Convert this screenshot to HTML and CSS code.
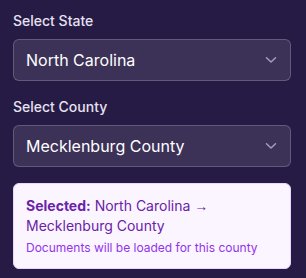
FILE: index.html
```html
<!DOCTYPE html>
<html>
<head>
<meta charset="utf-8">
<link rel="stylesheet" href="styles.css">
</head>
<body>
<div class="panel">
  <div class="field">
    <label class="label">Select State</label>
    <div class="select">
      <span class="value">North Carolina</span>
      <svg class="chev" width="12" height="8" viewBox="0 0 12 8"><path d="M1.5 1.8 L6 6 L10.5 1.8" fill="none" stroke="currentColor" stroke-width="1.5" stroke-linecap="round" stroke-linejoin="round"/></svg>
    </div>
  </div>
  <div class="field">
    <label class="label">Select County</label>
    <div class="select">
      <span class="value">Mecklenburg County</span>
      <svg class="chev" width="12" height="8" viewBox="0 0 12 8"><path d="M1.5 1.8 L6 6 L10.5 1.8" fill="none" stroke="currentColor" stroke-width="1.5" stroke-linecap="round" stroke-linejoin="round"/></svg>
    </div>
  </div>
  <div class="card">
    <p class="sel"><strong>Selected:</strong> North Carolina <span class="arrow">→</span> Mecklenburg County</p>
    <p class="note">Documents will be loaded for this county</p>
  </div>
</div>
</body>
</html>
```
FILE: styles.css
```css
html, body {
  margin: 0;
  padding: 0;
  background: #261b45;
  font-family: Inter, "Noto Sans", sans-serif;
}
.panel {
  padding: 11px 15px 0 13px;
  display: flex;
  flex-direction: column;
  gap: 16px;
}
.field {
  display: flex;
  flex-direction: column;
  gap: 8px;
}
.label {
  font-size: 14px;
  line-height: 20px;
  font-weight: 500;
  color: #e6e1f2;
}
.select {
  height: 42px;
  box-sizing: border-box;
  border: 1px solid rgba(255,255,255,0.2);
  background: rgba(255,255,255,0.1);
  border-radius: 6px;
  padding: 0 13px 0 12px;
  display: flex;
  align-items: center;
  justify-content: space-between;
}
.value {
  font-size: 16px;
  color: #ffffff;
}
.chev {
  color: #a59dba;
}
.card {
  background: #faf5ff;
  border: 1px solid #e9d5ff;
  border-radius: 6px;
  padding: 12px 12px 12px 12px;
}
.sel {
  margin: 0;
  font-size: 14px;
  line-height: 20px;
  color: #6b21a8;
}
.sel strong {
  font-weight: 700;
}
.arrow {
  font-family: "Liberation Sans", sans-serif;
}
.note {
  margin: 4px 0 0;
  font-size: 12px;
  line-height: 16px;
  color: #9333ea;
}
```
